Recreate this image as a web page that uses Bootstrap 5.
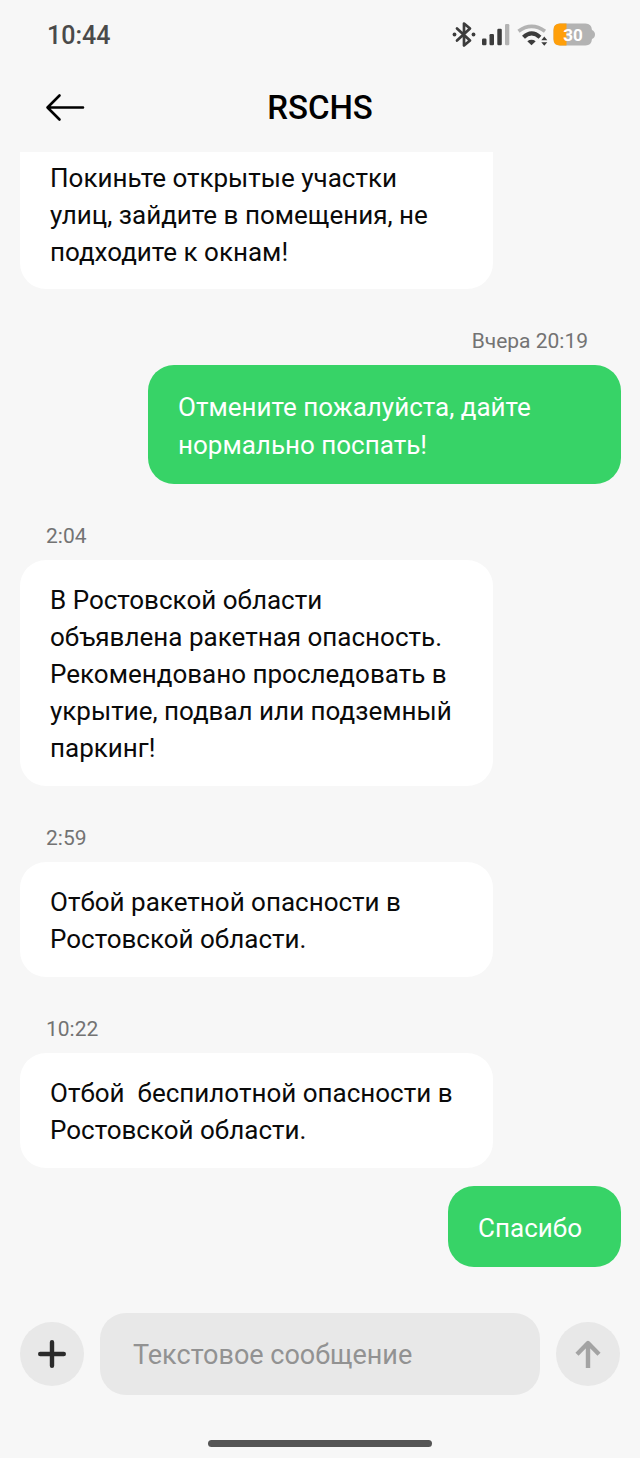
<!DOCTYPE html>
<html lang="ru">
<head>
<meta charset="utf-8">
<meta name="viewport" content="width=device-width, initial-scale=1">
<title>RSCHS</title>
<link href="https://cdn.jsdelivr.net/npm/bootstrap@5.3.0/dist/css/bootstrap.min.css" rel="stylesheet">
<style>
  body { background: #f7f7f7; color: #0a0a0a; font-family: Roboto, "Noto Sans", sans-serif; }
  .status-bar { padding: 18px 45px 0 47px; height: 72px; color: #4a4a4a; font-size: 25px; line-height: 36px; font-weight: 500; }
  .battery-label { font: 700 17px/24px Roboto, sans-serif; fill: #fff; }
  .chat-header { display: grid; grid-template-columns: 1fr auto 1fr; align-items: center; padding: 0 45px 9px; height: 80px; }
  .chat-header h1 { font-size: 33px; line-height: 40px; font-weight: 500; color: #000; }
  .thread { padding: 0 19px 0 20px; }
  .bubble { width: 79%; max-width: 473px; border-radius: 26px; padding: 22px 30px 19px; background: #fff; font-size: 26px; line-height: 37px; }
  .bubble-cut { border-radius: 0 0 26px 26px; padding-top: 8px; padding-bottom: 18px; }
  .bubble-out { background: #37d367; color: #fff; line-height: 38px; padding: 23px 30px 20px; }
  .bubble-short { width: auto; padding-right: 39px; margin-top: 18px; }
  .stamp { padding: 40px 33px 12px 26px; font-size: 21px; line-height: 24px; color: #737373; }
  .composer { padding: 46px 20px 45px; gap: 16px; }
  .round-btn { width: 64px; height: 64px; border: 0; border-radius: 50%; background: #e8e8e8; color: #2b2b2b; }
  .composer .form-control { height: 82px; min-width: 0; border: 0; border-radius: 26px; background: #e8e8e8; padding: 2px 33px 0; font-size: 27px; }
  .composer .form-control::placeholder { color: #929292; opacity: 1; }
  .home-bar { width: 35%; height: 7px; background: #555; margin-bottom: 11px; }
</style>
</head>
<body>
<div class="min-vh-100 d-flex flex-column">
  <div class="status-bar d-flex justify-content-between">
    <span>10:44</span>
    <svg width="144" height="34" viewBox="0 0 144 34" aria-hidden="true">
      <path d="M6 10.500 19 22.500 13 27.500V5.500L19 10.500 6 22.500" fill="none" stroke="#3c3c3c" stroke-width="2.700" stroke-linejoin="round" stroke-linecap="round"/>
      <g fill="#3c3c3c">
        <circle cx="3.500" cy="16.500" r="1.900"/><circle cx="22.500" cy="16.500" r="1.900"/>
        <rect x="31" y="20.500" width="4.500" height="6.800" rx="1.200"/>
        <rect x="38.500" y="16" width="4.500" height="11.300" rx="1.200"/>
        <rect x="46.300" y="10.700" width="4.500" height="16.600" rx="1.200"/>
        <path d="M80.500 27.300 76.300 23.200Q80.500 20.500 84.700 23.200Z"/>
        <path d="M90.300 22.200 93.300 18.600 96.300 22.200ZM90.300 24.200 93.300 27.800 96.300 24.200Z"/>
      </g>
      <rect x="54" y="6" width="4.300" height="21.300" rx="1.200" fill="#b3b3b3"/>
      <path d="M67.500 13.200Q80.500 3.500 94 13.200" fill="none" stroke="#b3b3b3" stroke-width="3.600"/>
      <path d="M72.500 19.200Q80.500 11.500 89 19.200" fill="none" stroke="#3c3c3c" stroke-width="4.200"/>
      <path d="M109 5.500H134.500Q140.500 5.500 141 12Q144 13.500 144 16.500Q144 19.500 141 21Q140.500 27.500 134.500 27.500H109Q102.500 27.500 102.500 21V12Q102.500 5.500 109 5.500Z" fill="#b3b3b3"/>
      <path d="M115.500 5.500H109Q102.500 5.500 102.500 12V21Q102.500 27.500 109 27.500H115.500Z" fill="#ff9f0a"/>
      <text x="122" y="22.500" text-anchor="middle" class="battery-label">30</text>
    </svg>
  </div>
  <header class="chat-header">
    <button type="button" class="btn p-0 border-0 text-start d-flex" aria-label="Назад">
      <svg width="40" height="30" viewBox="0 0 40 30" fill="none" stroke="#000" stroke-width="2.600" stroke-linecap="round" stroke-linejoin="round"><path d="M38 14.500H2.500M14.500 2.500 2.500 14.500 14.500 26.500"/></svg>
    </button>
    <h1 class="m-0">RSCHS</h1>
  </header>

  <main class="thread d-flex flex-column align-items-start">
    <div class="bubble bubble-cut">Покиньте открытые участки<br>улиц, зайдите в помещения, не<br>подходите к окнам!</div>
    <time class="stamp align-self-end">Вчера 20:19</time>
    <div class="bubble bubble-out align-self-end">Отмените пожалуйста, дайте<br>нормально поспать!</div>
    <time class="stamp">2:04</time>
    <div class="bubble">В Ростовской области<br>объявлена ракетная опасность.<br>Рекомендовано проследовать в<br>укрытие, подвал или подземный<br>паркинг!</div>
    <time class="stamp">2:59</time>
    <div class="bubble">Отбой ракетной опасности в<br>Ростовской области.</div>
    <time class="stamp">10:22</time>
    <div class="bubble">Отбой&nbsp; беспилотной опасности в<br>Ростовской области.</div>
    <div class="bubble bubble-out bubble-short align-self-end">Спасибо</div>
  </main>

  <form class="composer d-flex align-items-center mt-auto">
    <button type="button" class="round-btn btn p-0 flex-shrink-0 d-flex align-items-center justify-content-center" aria-label="Добавить">
      <svg width="32" height="32" viewBox="0 0 32 32" fill="none" stroke="#2b2b2b" stroke-width="4.400" stroke-linecap="round"><path d="M16 4.200V27.800M4.200 16H27.800"/></svg>
    </button>
    <input type="text" class="form-control flex-fill" placeholder="Текстовое сообщение" aria-label="Текстовое сообщение">
    <button type="submit" class="round-btn btn p-0 flex-shrink-0 d-flex align-items-center justify-content-center" aria-label="Отправить">
      <svg width="32" height="32" viewBox="0 0 32 32" fill="none" stroke="#a3a3a3" stroke-width="4.400"><path d="M16 30V5M5 16.200 16 5 27 16.200" stroke-linejoin="round"/></svg>
    </button>
  </form>
  <div class="home-bar rounded-pill mx-auto"></div>
</div>
<script src="https://cdn.jsdelivr.net/npm/bootstrap@5.3.0/dist/js/bootstrap.bundle.min.js"></script>
</body>
</html>
